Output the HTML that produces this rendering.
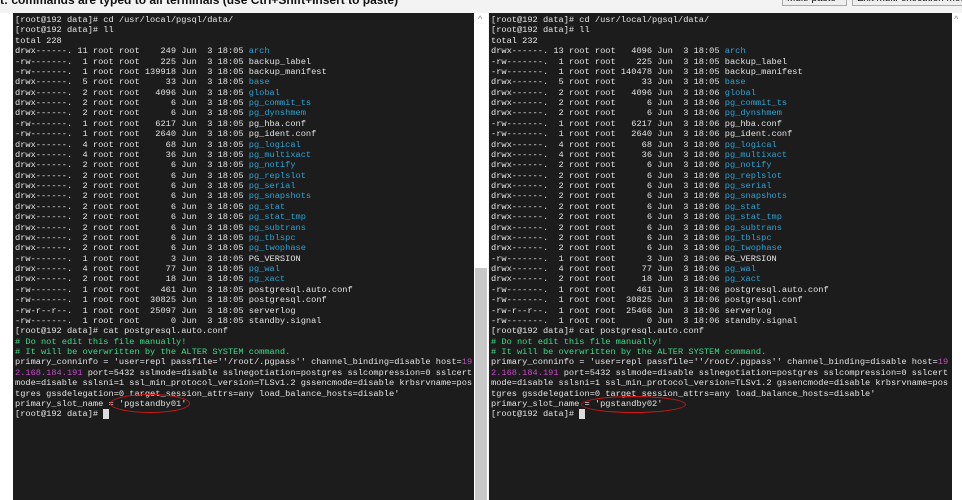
<!DOCTYPE html>
<html><head><meta charset="utf-8"><style>
html,body{margin:0;padding:0;width:962px;height:500px;overflow:hidden;background:#f3f3f3;font-family:"Liberation Sans",sans-serif;}
.top{position:absolute;left:0;top:-7px;font-weight:bold;font-size:12px;color:#111;white-space:nowrap}
.btn{position:absolute;top:-8px;height:12px;border:1px solid #aaa;background:#eee;font-size:10px;padding:0 4px;white-space:nowrap;color:#111;overflow:hidden}
.term{position:absolute;top:13px;height:487px;background:#1c1c1c;overflow:hidden}
pre{margin:0;padding:2px 0 0 2px;font-family:"Liberation Mono",monospace;font-size:8.67px;line-height:10.37px;color:#e4e4e4;white-space:pre}
.b{color:#2ba3d6}.g{color:#3ddc84}.m{color:#c848c8}
.cur{background:#dcdcdc}
.ell{position:absolute;border:1.5px solid #d01818;border-radius:50%}
</style></head><body>
<div class="top">t: commands are typed to all terminals (use Ctrl+Shift+Insert to paste)</div>
<div class="btn" style="left:782px;width:55px">Multi-paste</div>
<div class="btn" style="left:852px;width:102px">Exit multi-execution mode</div>
<div style="position:absolute;left:0;top:13px;width:13px;height:487px;background:#fff"></div>
<div class="term" style="left:13px;width:461px"><pre>[root@192 data]# cd /usr/local/pgsql/data/
[root@192 data]# ll
total 228
drwx------. 11 root root    249 Jun  3 18:05 <span class="b">arch</span>
-rw-------.  1 root root    225 Jun  3 18:05 backup_label
-rw-------.  1 root root 139918 Jun  3 18:05 backup_manifest
drwx------.  5 root root     33 Jun  3 18:05 <span class="b">base</span>
drwx------.  2 root root   4096 Jun  3 18:05 <span class="b">global</span>
drwx------.  2 root root      6 Jun  3 18:05 <span class="b">pg_commit_ts</span>
drwx------.  2 root root      6 Jun  3 18:05 <span class="b">pg_dynshmem</span>
-rw-------.  1 root root   6217 Jun  3 18:05 pg_hba.conf
-rw-------.  1 root root   2640 Jun  3 18:05 pg_ident.conf
drwx------.  4 root root     68 Jun  3 18:05 <span class="b">pg_logical</span>
drwx------.  4 root root     36 Jun  3 18:05 <span class="b">pg_multixact</span>
drwx------.  2 root root      6 Jun  3 18:05 <span class="b">pg_notify</span>
drwx------.  2 root root      6 Jun  3 18:05 <span class="b">pg_replslot</span>
drwx------.  2 root root      6 Jun  3 18:05 <span class="b">pg_serial</span>
drwx------.  2 root root      6 Jun  3 18:05 <span class="b">pg_snapshots</span>
drwx------.  2 root root      6 Jun  3 18:05 <span class="b">pg_stat</span>
drwx------.  2 root root      6 Jun  3 18:05 <span class="b">pg_stat_tmp</span>
drwx------.  2 root root      6 Jun  3 18:05 <span class="b">pg_subtrans</span>
drwx------.  2 root root      6 Jun  3 18:05 <span class="b">pg_tblspc</span>
drwx------.  2 root root      6 Jun  3 18:05 <span class="b">pg_twophase</span>
-rw-------.  1 root root      3 Jun  3 18:05 PG_VERSION
drwx------.  4 root root     77 Jun  3 18:05 <span class="b">pg_wal</span>
drwx------.  2 root root     18 Jun  3 18:05 <span class="b">pg_xact</span>
-rw-------.  1 root root    461 Jun  3 18:05 postgresql.auto.conf
-rw-------.  1 root root  30825 Jun  3 18:05 postgresql.conf
-rw-r--r--.  1 root root  25097 Jun  3 18:05 serverlog
-rw-------.  1 root root      0 Jun  3 18:05 standby.signal
[root@192 data]# cat postgresql.auto.conf
<span class="g"># Do not edit this file manually!</span>
<span class="g"># It will be overwritten by the ALTER SYSTEM command.</span>
primary_conninfo = 'user=repl passfile=''/root/.pgpass'' channel_binding=disable host=<span class="m">19</span>
<span class="m">2.168.184.191</span> port=5432 sslmode=disable sslnegotiation=postgres sslcompression=0 sslcert
mode=disable sslsni=1 ssl_min_protocol_version=TLSv1.2 gssencmode=disable krbsrvname=pos
tgres gssdelegation=0 target_session_attrs=any load_balance_hosts=disable'
primary_slot_name = 'pgstandby01'
[root@192 data]# <span class="cur"> </span></pre></div>
<div style="position:absolute;left:474px;top:13px;width:14px;height:487px;background:#fff"></div>
<div style="position:absolute;left:475px;top:268px;width:12px;height:232px;background:#c8c8c8"></div>
<div style="position:absolute;left:478px;top:14px;font-size:9px;color:#888">^</div>
<div class="term" style="left:489px;width:463px"><pre>[root@192 data]# cd /usr/local/pgsql/data/
[root@192 data]# ll
total 232
drwx------. 13 root root   4096 Jun  3 18:05 <span class="b">arch</span>
-rw-------.  1 root root    225 Jun  3 18:05 backup_label
-rw-------.  1 root root 140478 Jun  3 18:05 backup_manifest
drwx------.  5 root root     33 Jun  3 18:05 <span class="b">base</span>
drwx------.  2 root root   4096 Jun  3 18:06 <span class="b">global</span>
drwx------.  2 root root      6 Jun  3 18:06 <span class="b">pg_commit_ts</span>
drwx------.  2 root root      6 Jun  3 18:06 <span class="b">pg_dynshmem</span>
-rw-------.  1 root root   6217 Jun  3 18:06 pg_hba.conf
-rw-------.  1 root root   2640 Jun  3 18:06 pg_ident.conf
drwx------.  4 root root     68 Jun  3 18:06 <span class="b">pg_logical</span>
drwx------.  4 root root     36 Jun  3 18:06 <span class="b">pg_multixact</span>
drwx------.  2 root root      6 Jun  3 18:06 <span class="b">pg_notify</span>
drwx------.  2 root root      6 Jun  3 18:06 <span class="b">pg_replslot</span>
drwx------.  2 root root      6 Jun  3 18:06 <span class="b">pg_serial</span>
drwx------.  2 root root      6 Jun  3 18:06 <span class="b">pg_snapshots</span>
drwx------.  2 root root      6 Jun  3 18:06 <span class="b">pg_stat</span>
drwx------.  2 root root      6 Jun  3 18:06 <span class="b">pg_stat_tmp</span>
drwx------.  2 root root      6 Jun  3 18:06 <span class="b">pg_subtrans</span>
drwx------.  2 root root      6 Jun  3 18:06 <span class="b">pg_tblspc</span>
drwx------.  2 root root      6 Jun  3 18:06 <span class="b">pg_twophase</span>
-rw-------.  1 root root      3 Jun  3 18:06 PG_VERSION
drwx------.  4 root root     77 Jun  3 18:06 <span class="b">pg_wal</span>
drwx------.  2 root root     18 Jun  3 18:06 <span class="b">pg_xact</span>
-rw-------.  1 root root    461 Jun  3 18:06 postgresql.auto.conf
-rw-------.  1 root root  30825 Jun  3 18:06 postgresql.conf
-rw-r--r--.  1 root root  25466 Jun  3 18:06 serverlog
-rw-------.  1 root root      0 Jun  3 18:06 standby.signal
[root@192 data]# cat postgresql.auto.conf
<span class="g"># Do not edit this file manually!</span>
<span class="g"># It will be overwritten by the ALTER SYSTEM command.</span>
primary_conninfo = 'user=repl passfile=''/root/.pgpass'' channel_binding=disable host=<span class="m">19</span>
<span class="m">2.168.184.191</span> port=5432 sslmode=disable sslnegotiation=postgres sslcompression=0 sslcert
mode=disable sslsni=1 ssl_min_protocol_version=TLSv1.2 gssencmode=disable krbsrvname=pos
tgres gssdelegation=0 target_session_attrs=any load_balance_hosts=disable'
primary_slot_name = 'pgstandby02'
[root@192 data]# <span class="cur"> </span></pre></div>
<div style="position:absolute;left:952px;top:13px;width:10px;height:487px;background:#fff"></div>
<div style="position:absolute;left:954px;top:14px;font-size:9px;color:#888">^</div>
<div class="ell" style="left:110px;top:394px;width:78px;height:17px"></div>
<div class="ell" style="left:581px;top:396px;width:103px;height:15px"></div>
</body></html>
